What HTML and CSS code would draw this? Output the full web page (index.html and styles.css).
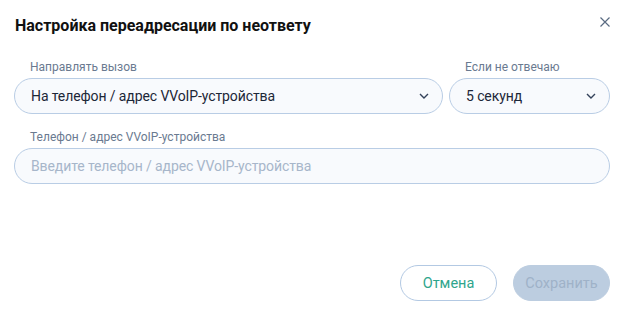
FILE: index.html
```html
<!DOCTYPE html>
<html lang="ru">
<head>
<meta charset="utf-8">
<link rel="stylesheet" href="styles.css">
</head>
<body>
<div class="dialog">
  <div class="header">
    <h1 class="title">Настройка переадресации по неответу</h1>
    <button class="close" aria-label="Закрыть">
      <svg width="10" height="10" viewBox="0 0 10 10"><path d="M0.5 0.5L9.5 9.5M9.5 0.5L0.5 9.5" stroke="#5a6b82" stroke-width="1.2" fill="none"/></svg>
    </button>
  </div>
  <div class="row">
    <div class="field field-main">
      <div class="label">Направлять вызов</div>
      <div class="select">
        <span class="value">На телефон / адрес VVoIP-устройства</span>
        <svg class="chev" width="10" height="6" viewBox="0 0 10 6"><path d="M1 1L5 5L9 1" stroke="#34425a" stroke-width="1.4" fill="none"/></svg>
      </div>
    </div>
    <div class="field field-side">
      <div class="label">Если не отвечаю</div>
      <div class="select">
        <span class="value">5 секунд</span>
        <svg class="chev" width="10" height="6" viewBox="0 0 10 6"><path d="M1 1L5 5L9 1" stroke="#34425a" stroke-width="1.4" fill="none"/></svg>
      </div>
    </div>
  </div>
  <div class="field field-phone">
    <div class="label">Телефон / адрес VVoIP-устройства</div>
    <div class="input"><span class="placeholder">Введите телефон / адрес VVoIP-устройства</span></div>
  </div>
  <div class="actions">
    <button class="btn btn-cancel">Отмена</button>
    <button class="btn btn-save">Сохранить</button>
  </div>
</div>
</body>
</html>
```
FILE: styles.css
```css
* { box-sizing: border-box; }
html, body { margin: 0; padding: 0; background: #ffffff; }
body { font-family: Roboto, "Noto Sans", sans-serif; color: #1e2a3b; }
.dialog { width: 626px; height: 320px; padding: 14px 16px 0 14px; display: flex; flex-direction: column; }
.header { display: flex; justify-content: space-between; align-items: flex-start; height: 30px; }
.title { margin: 0; font-size: 16px; font-weight: 700; line-height: 24px; color: #111111; padding-left: 1px; }
.close { border: 0; background: none; padding: 0; width: 10px; height: 10px; margin-top: 3px; margin-right: 0; display: flex; }
.row { display: flex; gap: 6px; margin-top: 15px; }
.field { display: flex; flex-direction: column; }
.field-main { flex: 0 0 429px; }
.field-side { flex: 0 0 161px; }
.label { font-size: 12px; line-height: 16px; color: #6a7a90; padding-left: 16px; margin-bottom: 3px; }
.select, .input { height: 36px; border: 1px solid #b9cde5; border-radius: 18px; background: #f8fafd; display: flex; align-items: center; padding: 0 13px 0 16px; }
.select { justify-content: space-between; }
.value { font-size: 14px; letter-spacing: -0.1px; color: #1c2738; }
.chev { flex: none; }
.field-phone { margin-top: 15px; width: 596px; }
.placeholder { font-size: 14px; letter-spacing: -0.1px; color: #a7b6ca; }
.actions { display: flex; justify-content: flex-end; gap: 16px; margin-top: auto; margin-bottom: 19px; }
.btn { width: 97px; height: 36px; border-radius: 18px; font-family: Roboto, sans-serif; font-size: 14.5px; padding: 0; }
.btn-cancel { background: #ffffff; border: 1px solid #b3c9e3; color: #2fa58c; }
.btn-save { background: #bccde0; border: 1px solid #bccde0; color: #9fb2c8; }
```
